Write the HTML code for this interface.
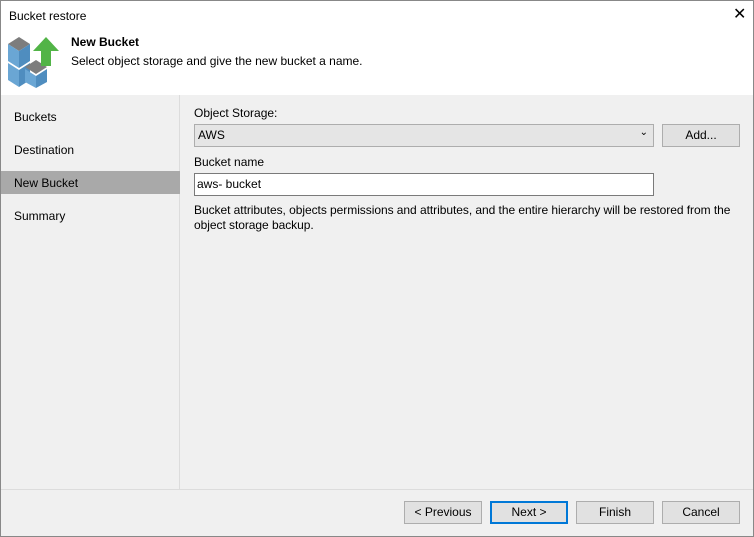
<!DOCTYPE html><html><head><style>
*{margin:0;padding:0;box-sizing:border-box}
body{width:754px;height:537px;font-family:"Liberation Sans",sans-serif;font-size:12px;color:#000;background:#f0f0f0;position:relative;overflow:hidden}
.win{position:absolute;inset:0;border:1px solid #888}
.abs{position:absolute}
.btn{position:absolute;top:501px;height:23px;width:78px;border:1px solid #adadad;background:#e1e1e1;text-align:center;line-height:21px}
</style></head><body>
<div class="abs" style="left:0;top:0;width:754px;height:95px;background:#fff"></div>
<div class="abs" style="left:9px;top:9px">Bucket restore</div>
<div class="abs" style="left:733px;top:4px;font-size:16px">✕</div>
<svg class="abs" style="left:0;top:0" width="70" height="95" viewBox="0 0 70 95">
<polygon points="8,44 19,37 30,44 19,51" fill="#7d7d7d"/>
<polygon points="8,44 19,51 19,68 8,61" fill="#6aa6d4"/>
<polygon points="19,51 30,44 30,61 19,68" fill="#4f8dbf"/>
<polygon points="8,63 19,70 19,87 8,80" fill="#6aa6d4"/>
<polygon points="19,70 30,63 30,80 19,87" fill="#4f8dbf"/>
<polygon points="25,67 36,60 47,67 36,74" fill="#7d7d7d"/>
<polygon points="25,69 36,76 36,88 25,82" fill="#6aa6d4"/>
<polygon points="36,76 47,69 47,82 36,88" fill="#4f8dbf"/>
<polygon points="46,37 59,51 51,51 51,66 41,66 41,51 33,51" fill="#52b447"/>
</svg>
<div class="abs" style="left:71px;top:35px;font-weight:bold">New Bucket</div>
<div class="abs" style="left:71px;top:54px">Select object storage and give the new bucket a name.</div>
<div class="abs" style="left:0;top:95px;width:180px;height:394px;background:#f0f0f0;border-right:1px solid #dcdcdc"></div>
<div class="abs" style="left:14px;top:110px">Buckets</div>
<div class="abs" style="left:14px;top:143px">Destination</div>
<div class="abs" style="left:0;top:171px;width:180px;height:23px;background:#a9a9a9"></div>
<div class="abs" style="left:14px;top:176px">New Bucket</div>
<div class="abs" style="left:14px;top:209px">Summary</div>
<div class="abs" style="left:194px;top:106px">Object Storage:</div>
<div class="abs" style="left:194px;top:124px;width:460px;height:23px;background:#e5e5e5;border:1px solid #adadad;padding:3px 3px">AWS<span style="position:absolute;right:5px;top:2px;font-size:10px">&#8964;</span></div>
<div class="btn" style="left:662px;top:124px;height:23px">Add...</div>
<div class="abs" style="left:194px;top:155px">Bucket name</div>
<div class="abs" style="left:194px;top:173px;width:460px;height:23px;background:#fff;border:1px solid #7a7a7a;padding:3px 2px">aws- bucket</div>
<div class="abs" style="left:194px;top:203px;line-height:15px;letter-spacing:-0.05px">Bucket attributes, objects permissions and attributes, and the entire hierarchy will be restored from the<br>object storage backup.</div>
<div class="abs" style="left:0;top:489px;width:754px;height:1px;background:#dcdcdc"></div>
<div class="btn" style="left:404px">&lt; Previous</div>
<div class="btn" style="left:490px;border:1px solid #0078d7;box-shadow:inset 0 0 0 1px #0078d7">Next &gt;</div>
<div class="btn" style="left:576px">Finish</div>
<div class="btn" style="left:662px">Cancel</div>
<div class="win"></div>
</body></html>
